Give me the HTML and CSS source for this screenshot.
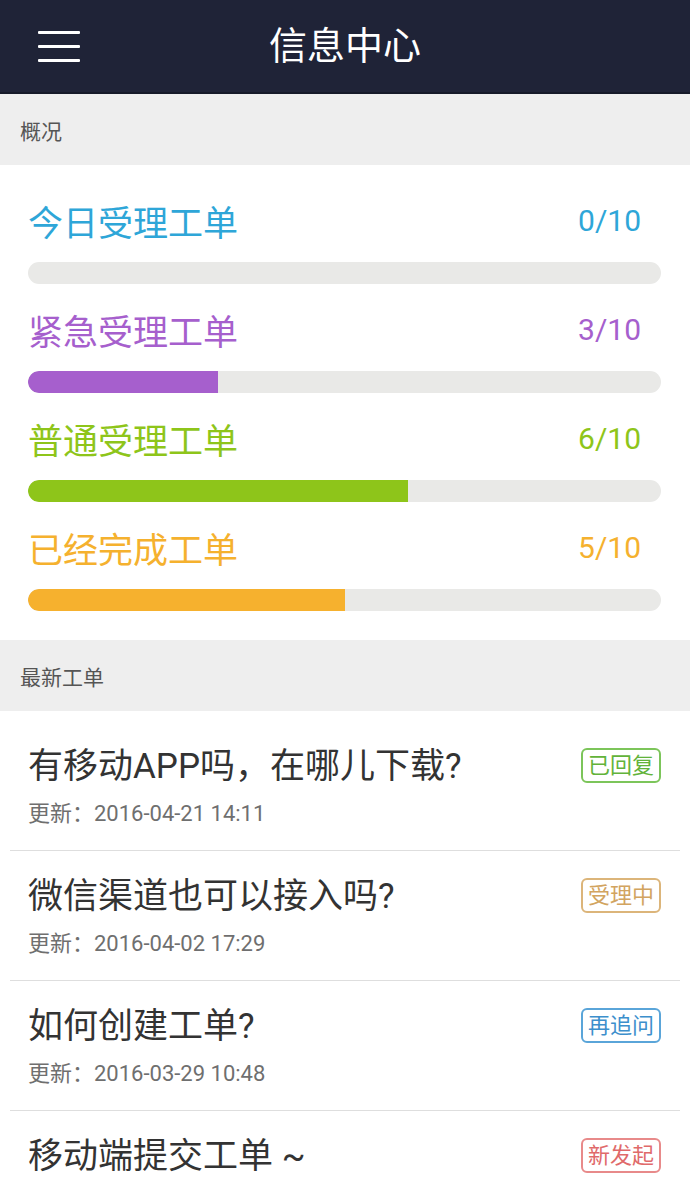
FILE: index.html
```html
<!DOCTYPE html>
<html lang="zh-CN">
<head>
<meta charset="utf-8">
<title>信息中心</title>
<link rel="stylesheet" href="styles.css">
</head>
<body>
<header class="topbar">
  <div class="menu"><span></span><span></span><span></span></div>
  <h1 class="title">信息中心</h1>
</header>

<div class="section-head">概况</div>
<section class="stats">
  <div class="stat blue">
    <div class="stat-line"><span class="stat-label">今日受理工单</span><span class="stat-val">0/10</span></div>
    <div class="bar"><div class="fill" style="width:0%"></div></div>
  </div>
  <div class="stat purple">
    <div class="stat-line"><span class="stat-label">紧急受理工单</span><span class="stat-val">3/10</span></div>
    <div class="bar"><div class="fill" style="width:30%"></div></div>
  </div>
  <div class="stat green">
    <div class="stat-line"><span class="stat-label">普通受理工单</span><span class="stat-val">6/10</span></div>
    <div class="bar"><div class="fill" style="width:60%"></div></div>
  </div>
  <div class="stat orange">
    <div class="stat-line"><span class="stat-label">已经完成工单</span><span class="stat-val">5/10</span></div>
    <div class="bar"><div class="fill" style="width:50%"></div></div>
  </div>
</section>

<div class="section-head">最新工单</div>
<ul class="list">
  <li class="item">
    <div class="item-main">
      <div class="item-title">有移动APP吗，在哪儿下载?</div>
      <div class="item-date">更新：2016-04-21 14:11</div>
    </div>
    <span class="badge b-green">已回复</span>
  </li>
  <li class="item">
    <div class="item-main">
      <div class="item-title">微信渠道也可以接入吗?</div>
      <div class="item-date">更新：2016-04-02 17:29</div>
    </div>
    <span class="badge b-tan">受理中</span>
  </li>
  <li class="item">
    <div class="item-main">
      <div class="item-title">如何创建工单?</div>
      <div class="item-date">更新：2016-03-29 10:48</div>
    </div>
    <span class="badge b-blue">再追问</span>
  </li>
  <li class="item">
    <div class="item-main">
      <div class="item-title">移动端提交工单 ~</div>
    </div>
    <span class="badge b-red">新发起</span>
  </li>
</ul>
</body>
</html>
```

FILE: styles.css
```css
* { box-sizing: border-box; }
html, body { margin: 0; padding: 0; }
body {
  width: 690px;
  background: #ffffff;
  font-family: "Roboto", "Noto Sans CJK SC", "Noto Sans", sans-serif;
  overflow: hidden;
}

.topbar {
  height: 94px;
  background: #1f2337;
  border-bottom: 2px solid #161a29;
  display: flex;
  align-items: center;
  justify-content: center;
  position: relative;
}
.menu {
  position: absolute;
  left: 38px;
  top: 31px;
  width: 42px;
  display: flex;
  flex-direction: column;
  gap: 11px;
}
.menu span {
  display: block;
  height: 3px;
  background: #ffffff;
  border-radius: 1px;
}
.title {
  margin: 0;
  color: #ffffff;
  font-size: 38px;
  font-weight: 400;
  line-height: 1;
}

.section-head {
  height: 71px;
  background: #eeeeee;
  color: #555555;
  font-size: 21px;
  display: flex;
  align-items: center;
  padding-left: 20px;
}

.stats {
  padding: 30px 29px 29px 28px;
  display: flex;
  flex-direction: column;
  gap: 20px;
}
.stat-line {
  height: 50px;
  display: flex;
  align-items: center;
  justify-content: space-between;
  margin-bottom: 17px;
}
.stat-label { font-size: 35px; }
.stat-val { font-size: 30px; padding-right: 20px; }
.bar {
  height: 22px;
  border-radius: 11px;
  background: #e9e9e7;
  overflow: hidden;
}
.fill { height: 100%; border-radius: 11px 0 0 11px; }

.blue { color: #2ea6d8; }
.purple { color: #a65fcd; }
.green { color: #8ec51a; }
.orange { color: #f5b12e; }
.blue .fill { background: #2ea6d8; }
.purple .fill { background: #a65fcd; }
.green .fill { background: #8ec51a; }
.orange .fill { background: #f6b12e; }

.list {
  list-style: none;
  margin: 0;
  padding: 10px 0 0;
}
.item {
  margin: 0 10px;
  padding: 24px 19px 22px 18px;
  border-bottom: 1px solid #dedede;
  display: flex;
  align-items: flex-start;
  justify-content: space-between;
}
.item-title {
  height: 44px;
  line-height: 44px;
  font-size: 35px;
  color: #333333;
}
.item-date {
  margin-top: 11px;
  height: 28px;
  line-height: 28px;
  font-size: 22px;
  color: #6f6f6f;
}
.badge {
  margin-top: 3px;
  width: 80px;
  height: 35px;
  border: 2px solid;
  border-radius: 6px;
  font-size: 22px;
  display: flex;
  align-items: center;
  justify-content: center;
  line-height: 1;
}
.b-green { color: #62b33a; border-color: #7cc55a; }
.b-tan { color: #d2a460; border-color: #dcb57a; }
.b-blue { color: #3d8fcc; border-color: #5aa5d9; }
.b-red { color: #e06a6a; border-color: #e88a8a; }
```
